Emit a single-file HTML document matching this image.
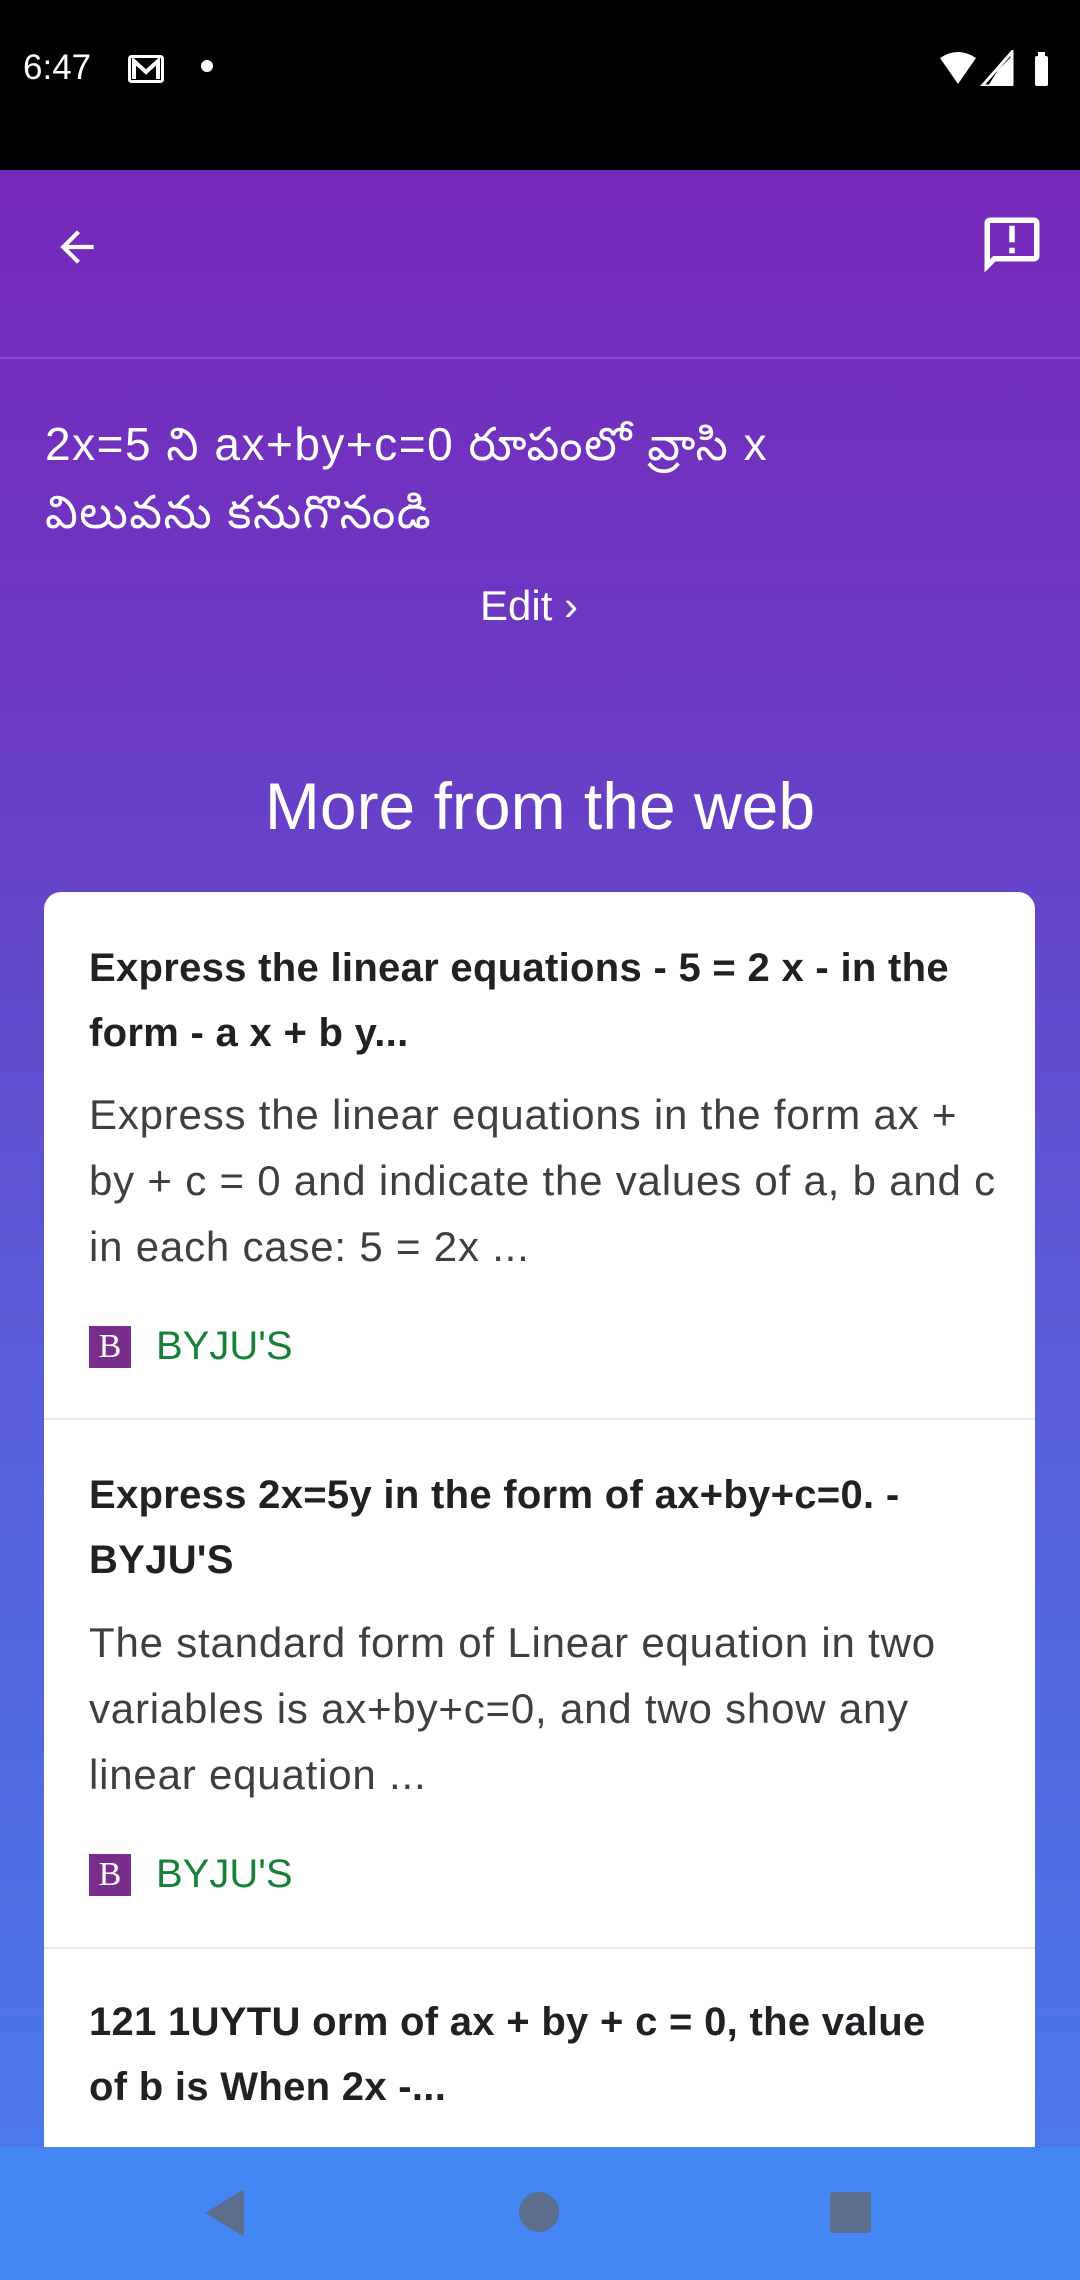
<!DOCTYPE html>
<html><head><meta charset="utf-8"><style>
*{margin:0;padding:0;box-sizing:border-box}
body{width:1080px;height:2280px;overflow:hidden;font-family:"Liberation Sans",sans-serif;position:relative;background:linear-gradient(180deg,#7628b9 170px,#6b3ac4 700px,#5a5bd6 1300px,#4b78ea 2147px)}
.abs{position:absolute;white-space:nowrap}
.sb{position:absolute;left:0;top:0;width:1080px;height:170px;background:#000}
.card{position:absolute;left:44px;top:892px;width:991px;height:1300px;background:#fff;border-radius:17px}
.t{position:absolute;left:45px;font-size:40px;font-weight:bold;color:#202124;line-height:65px;white-space:nowrap;letter-spacing:0.3px}
.d{position:absolute;left:45px;font-size:42px;color:#3c4043;line-height:66px;white-space:nowrap;letter-spacing:0.8px}
.src{position:absolute;left:45px;height:42px}
.src .ic{position:absolute;left:0;top:0;width:42px;height:42px;background:#7b2d8e;color:#fff;font-size:34px;line-height:42px;text-align:center;font-family:"Liberation Serif",serif}
.src span{position:absolute;left:67px;top:-2px;font-size:40px;color:#188038;white-space:nowrap}
.hr{position:absolute;left:0;width:991px;height:2px;background:#e8eaed}
.nav{position:absolute;left:0;top:2147px;width:1080px;height:133px;background:#4487f4}
</style></head><body>
<div class="sb"></div>
<div class="abs" style="left:23px;top:48px;font-size:35px;color:#fff">6:47</div>
<svg class="abs" style="left:128px;top:55px" width="36" height="28" viewBox="0 0 36 28"><rect x="1.5" y="1.5" width="33" height="25" rx="2" fill="none" stroke="#fff" stroke-width="3"/><path d="M6 24V6l12 11 12-11v18" fill="none" stroke="#fff" stroke-width="4"/></svg>
<div class="abs" style="left:201px;top:60px;width:12px;height:12px;border-radius:50%;background:#fff"></div>
<svg class="abs" style="left:938px;top:50px" width="110" height="36" viewBox="0 0 110 36"><path d="M2 8 Q20 -4 38 8 L20 34Z" fill="#fff"/><path d="M74 2V36H44Z" fill="none" stroke="#fff" stroke-width="3"/><path d="M60 20L74 6V36H50Z" fill="#fff"/><rect x="97" y="6" width="13" height="30" rx="2" fill="#fff"/><rect x="100" y="2" width="7" height="5" fill="#fff"/></svg>
<svg class="abs" style="left:52px;top:222px" width="50" height="50" viewBox="0 0 24 24"><path d="M20 11H7.83l5.59-5.59L12 4l-8 8 8 8 1.41-1.41L7.83 13H20v-2z" fill="#fff"/></svg>
<svg class="abs" style="left:979px;top:212px" width="66" height="66" viewBox="0 0 24 24"><path d="M20 2H4c-1.1 0-2 .9-2 2v18l4-4h14c1.1 0 2-.9 2-2V4c0-1.1-.9-2-2-2zm0 14H5.17L4 17.17V4h16v12zM11 5h2v6h-2zm0 8h2v2h-2z" fill="#fff"/></svg>
<div class="abs" style="left:0;top:357px;width:1080px;height:2px;background:rgba(255,255,255,0.15)"></div>
<div class="abs" style="left:45px;top:410px;font-size:46px;letter-spacing:1.5px;color:#fff;line-height:68px;font-family:'Liberation Sans','Noto Sans CJK JP',sans-serif">2x=5 ని ax+by+c=0 రూపంలో వ్రాసి x<br>విలువను కనుగొనండి</div>
<div class="abs" style="left:480px;top:582px;font-size:42px;color:#fff">Edit ›</div>
<div class="abs" style="left:0;width:1080px;text-align:center;top:768px;font-size:66px;color:#fff">More from the web</div>
<div class="card">
<div class="t" style="top:44px">Express the linear equations - 5 = 2 x - in the<br>form - a x + b y...</div>
<div class="d" style="top:190px">Express the linear equations in the form ax +<br>by + c = 0 and indicate the values of a, b and c<br>in each case: 5 = 2x ...</div>
<div class="src" style="top:434px"><div class="ic">B</div><span>BYJU'S</span></div>
<div class="hr" style="top:526px"></div>
<div class="t" style="top:571px">Express 2x=5y in the form of ax+by+c=0. -<br>BYJU'S</div>
<div class="d" style="top:718px">The standard form of Linear equation in two<br>variables is ax+by+c=0, and two show any<br>linear equation ...</div>
<div class="src" style="top:962px"><div class="ic">B</div><span>BYJU'S</span></div>
<div class="hr" style="top:1055px"></div>
<div class="t" style="top:1098px">121 1UYTU orm of ax + by + c = 0, the value<br>of b is When 2x -...</div>
</div>
<div class="nav"></div>
<svg class="abs" style="left:205px;top:2190px" width="40" height="46" viewBox="0 0 40 46"><path d="M38 1V45L2 23Z" fill="#5b6e8c" stroke="#5b6e8c" stroke-linejoin="round" stroke-width="2"/></svg>
<div class="abs" style="left:519px;top:2192px;width:40px;height:40px;border-radius:50%;background:#5b6e8c"></div>
<div class="abs" style="left:830px;top:2192px;width:41px;height:41px;border-radius:3px;background:#5b6e8c"></div>
</body></html>
